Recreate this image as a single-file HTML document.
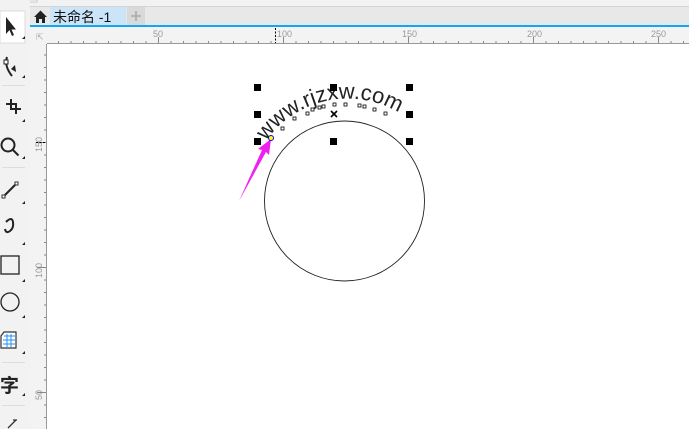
<!DOCTYPE html>
<html><head><meta charset="utf-8"><style>
*{margin:0;padding:0}
body{width:689px;height:429px;overflow:hidden;background:#fff;font-family:"Liberation Sans","Noto Sans CJK SC",sans-serif;position:relative}
</style></head><body>
<svg width="689" height="429" style="position:absolute;left:0;top:0" font-family="Liberation Sans, Noto Sans CJK SC, sans-serif">
<rect x="0" y="0" width="689" height="6" fill="#f2f2f2"/>
<rect x="5" y="0" width="32" height="2" fill="#fff" stroke="#aaa" stroke-width="0.6"/>
<line x1="0" y1="6.5" x2="689" y2="6.5" stroke="#d4d4d4"/>
<rect x="0" y="0" width="30" height="429" fill="#f2f2f2"/>
<rect x="0" y="11" width="25" height="32" fill="#fff" stroke="#c8c8c8" stroke-width="0.6"/>
<path d="M6 17 L6 34 L9.5 30 L12 36 L14 35 L11.5 29.5 L16 29.5 Z" fill="#222"/>
<path d="M22 39 l3 0 l0 -3z" fill="#222"/>
<g fill="none" stroke="#222" stroke-width="2">
<path d="M7 57 Q4 66 12 76"/>
<rect x="4" y="60" width="4" height="4" fill="#fff" stroke-width="1"/>
<path d="M6 104 h10 v10 M11 99 v10 h10"/>
<circle cx="8" cy="145" r="6.5"/><path d="M12.5 149.5 l6 6"/>
<path d="M3 197 l13 -13"/>
<path d="M6 222 q6 -6 7 0 q1 6 -3 9 q-4 3 -5 -2"/>
<rect x="1" y="256" width="18" height="18" stroke-width="1.3"/>
<circle cx="10" cy="302" r="9" stroke-width="1.3"/>
</g>
<rect x="2" y="195" width="3" height="3" fill="#fff" stroke="#333"/>
<rect x="15" y="182" width="3" height="3" fill="#fff" stroke="#333"/>
<path d="M16 72 l-5 -3 l4 -4z" fill="#222"/>
<g fill="#222"><path d="M22 78 l3 0 l0 -3z"/><path d="M22 122 l3 0 l0 -3z"/><path d="M22 159 l3 0 l0 -3z"/><path d="M22 204 l3 0 l0 -3z"/><path d="M22 245 l3 0 l0 -3z"/><path d="M22 282 l3 0 l0 -3z"/><path d="M22 318 l3 0 l0 -3z"/><path d="M22 354 l3 0 l0 -3z"/><path d="M22 396 l3 0 l0 -3z"/></g>
<path d="M4 332 h12 v16 h-15 v-12z" fill="#fff" stroke="#333" stroke-width="1.2"/>
<g stroke="#1e90ff" stroke-width="1"><path d="M4 336 h11 M3 340 h12 M3 344 h12 M7 334 v13 M11 334 v13"/></g>
<line x1="2" y1="85.5" x2="25" y2="85.5" stroke="#ddd"/>
<line x1="2" y1="167.5" x2="25" y2="167.5" stroke="#ddd"/>
<line x1="2" y1="362.5" x2="25" y2="362.5" stroke="#ddd"/>
<line x1="2" y1="405.5" x2="25" y2="405.5" stroke="#ddd"/>
<text x="0" y="392" font-size="19" font-weight="bold" fill="#222">字</text>
<path d="M8 428 l8 -8 M13 420 l4 0" stroke="#333" stroke-width="1.3"/>
<rect x="30" y="7" width="659" height="19" fill="#e8e8e8"/>
<rect x="50" y="7" width="76" height="19" fill="#cce4f7"/>
<rect x="127" y="7" width="18" height="19" fill="#d9d9d9"/>
<path d="M136 11 v10 M131 16 h10" stroke="#a8a8a8" stroke-width="1.5"/>
<path d="M34 17 l6.5 -6.5 l6.5 6.5 h-2 v6 h-3 v-4 h-3 v4 h-3 v-6z" fill="#222"/>
<text x="53" y="22" font-size="14" fill="#111">未命名 -1</text>
<rect x="30" y="25" width="659" height="2" fill="#10a8f0"/>
<rect x="30" y="27" width="659" height="17" fill="#f3f3f3"/>
<line x1="46" y1="43.5" x2="689" y2="43.5" stroke="#999"/>
<rect x="30" y="27" width="17" height="402" fill="#f3f3f3"/>
<line x1="46.5" y1="44" x2="46.5" y2="429" stroke="#999"/>
<text x="36" y="40" font-size="9" fill="#aaa">⇱</text>
<g font-size="9" fill="#999">
<text x="153" y="37">50</text><text x="277" y="37">100</text><text x="402" y="37">150</text><text x="527" y="37">200</text><text x="651" y="37">250</text>
<text transform="translate(42,152) rotate(-90)">150</text>
<text transform="translate(42,278) rotate(-90)">100</text>
<text transform="translate(42,400) rotate(-90)">50</text>
</g>
<path d="M158.5 37v6 M283.5 37v6 M408.5 37v6 M533.5 37v6 M658.5 37v6 M37 142.5h9 M37 267.5h9 M37 392.5h9" stroke="#888"/>
<path d="M58.5 41v2 M71 41v2 M83.5 41v2 M96 41v2 M108.5 41v2 M121 41v2 M133.5 41v2 M146 41v2 M171 41v2 M183.5 41v2 M196 41v2 M208.5 41v2 M221 41v2 M233.5 41v2 M246 41v2 M258.5 41v2 M271 41v2 M296 41v2 M308.5 41v2 M321 41v2 M333.5 41v2 M346 41v2 M358.5 41v2 M371 41v2 M383.5 41v2 M396 41v2 M421 41v2 M433.5 41v2 M446 41v2 M458.5 41v2 M471 41v2 M483.5 41v2 M496 41v2 M508.5 41v2 M521 41v2 M546 41v2 M558.5 41v2 M571 41v2 M583.5 41v2 M596 41v2 M608.5 41v2 M621 41v2 M633.5 41v2 M646 41v2 M671 41v2 M683.5 41v2" stroke="#888"/>
<path d="M44 55h2 M44 67.5h2 M44 80h2 M44 92.5h2 M44 105h2 M44 117.5h2 M44 130h2 M44 155h2 M44 167.5h2 M44 180h2 M44 192.5h2 M44 205h2 M44 217.5h2 M44 230h2 M44 242.5h2 M44 255h2 M44 280h2 M44 292.5h2 M44 305h2 M44 317.5h2 M44 330h2 M44 342.5h2 M44 355h2 M44 367.5h2 M44 380h2 M44 405h2 M44 417.5h2" stroke="#888"/>
<path d="M275.5 28v15" stroke="#000" stroke-dasharray="2,1.5"/>
<path d="M36 142.5h10" stroke="#000" stroke-dasharray="2,1.5"/>
<circle cx="344.5" cy="201" r="80" fill="none" stroke="#222" stroke-width="0.9"/>
<defs><path id="arc" d="M266 141 A100 100 0 0 1 440 160"/></defs>
<text font-size="22" fill="#222"><textPath href="#arc">www.rjzxw.com</textPath></text>
<g fill="#000">
<rect x="254" y="84" width="7" height="7"/><rect x="330" y="84" width="7" height="7"/><rect x="406" y="84" width="7" height="7"/>
<rect x="254" y="111" width="7" height="7"/><rect x="406" y="111" width="7" height="7"/>
<rect x="254" y="138" width="7" height="7"/><rect x="330" y="138" width="7" height="7"/><rect x="406" y="138" width="7" height="7"/>
</g>
<path d="M331 111 l6 6 M337 111 l-6 6" stroke="#000" stroke-width="1.6"/>
<g fill="#fff" stroke="#000" stroke-width="0.8">
<rect x="281" y="127" width="3" height="3"/><rect x="293" y="117" width="3" height="3"/><rect x="306" y="112" width="3" height="3"/><rect x="311" y="108" width="3" height="3"/><rect x="318" y="106" width="3" height="3"/><rect x="322" y="105" width="3" height="3"/><rect x="333" y="103" width="3" height="3"/><rect x="344" y="103" width="3" height="3"/><rect x="358" y="104" width="3" height="3"/><rect x="363" y="105" width="3" height="3"/><rect x="373" y="108" width="3" height="3"/><rect x="384" y="112" width="3" height="3"/>
</g>
<path d="M239 201 L262 150 L258 149 L271 139 L269 155 L266 152 Z" fill="#f020f0"/>
<circle cx="271" cy="138" r="2.5" fill="#ff0" stroke="#00f" stroke-width="1"/>
</svg>
</body></html>
